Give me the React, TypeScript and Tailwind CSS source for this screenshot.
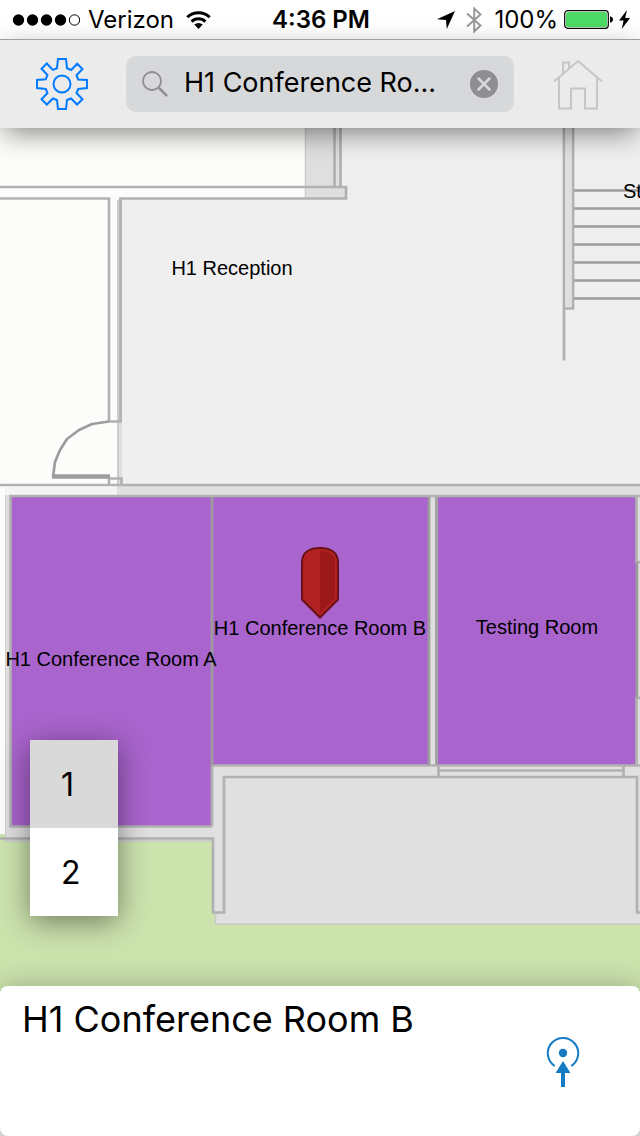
import { useState } from "react";

const stairs = [190, 208, 226, 244, 262, 280, 298];

function StatusBar() {
  return (
    <div className="grid h-[39px] grid-cols-[1fr_auto_1fr] items-center bg-white pr-[10px] pl-3 text-2xl text-black">
      <div className="flex items-center gap-2">
        <svg className="h-3 w-[68px]" viewBox="0 0 68 12" aria-hidden="true">
          <circle cx="6.5" cy="6" r="5.7" />
          <circle cx="20.5" cy="6" r="5.7" />
          <circle cx="34.5" cy="6" r="5.7" />
          <circle cx="48.5" cy="6" r="5.7" />
          <circle cx="62.5" cy="6" r="5.2" fill="none" stroke="#000" />
        </svg>
        <span>Verizon</span>
        <svg className="ml-1 h-[18px] w-[25px]" viewBox="0 0 25 18" aria-hidden="true">
          <g fill="none" stroke="#000" strokeWidth="3">
            <path d="M1.3 6.2a16 16 0 0 1 22.4 0" />
            <path d="M5.6 10.6a9.8 9.8 0 0 1 13.8 0" />
          </g>
          <path d="M8.3 13.6a6 6 0 0 1 8.4 0L12.5 18z" />
        </svg>
      </div>
      <span className="font-semibold">4:36 PM</span>
      <div className="flex items-center justify-end">
        <svg className="mr-[11px] h-[18px] w-[18px]" viewBox="0 0 18 18" aria-hidden="true">
          <path d="M18 0 0 8.2l9 .8.8 9z" />
        </svg>
        <svg className="mr-3 h-7 w-4" viewBox="0 0 16 28" fill="none" stroke="#999" strokeWidth="2" aria-hidden="true">
          <path d="M1 7.5 14.5 19.5 8.2 25.5V2.5L14.5 8.5 1 20.5" />
        </svg>
        <span className="mr-[6px]">100%</span>
        <svg className="mr-[6px] h-[19px] w-[49px]" viewBox="0 0 49 19" aria-hidden="true">
          <rect x=".7" y=".7" width="43.6" height="17.6" rx="3" fill="#fff" stroke="#000" strokeWidth="1.2" />
          <rect x="2" y="2" width="41" height="15" rx="1.8" fill="#4cd964" />
          <path d="M46 6.2c4 .6 4 6 0 6.6z" />
        </svg>
        <svg className="h-[19px] w-[11px]" viewBox="0 0 11 19" aria-hidden="true">
          <path d="M8 0 0 10.5h4.6L2.8 19 11 8H6.2z" />
        </svg>
      </div>
    </div>
  );
}

function GearIcon() {
  return (
    <svg className="h-[52px] w-[52px]" viewBox="0 0 52 52" fill="none" stroke="#007aff" strokeWidth="2" aria-hidden="true">
      <path d="M22 1h8l1 9.2 4.2 1.8 6-6.3 5.3 5.3-6 6.3 1.7 4.2L51 22v8l-8.8 1-1.7 4 6 6.3-5.4 5.2-6-6L31 42l-1 9h-8l-1-9-4-1.5-6.2 6-5.3-5.2L11.5 35 9.8 31 1 30v-8l8.8-.8L11.5 17l-6-6.2 5.3-5.3 6 6.4L21 10.200z" />
      <circle cx="26" cy="26" r="8.5" />
    </svg>
  );
}

function HomeIcon() {
  return (
    <svg className="h-[52px] w-[52px]" viewBox="0 0 52 52" fill="none" stroke="#c6c6c6" strokeWidth="2" aria-hidden="true">
      <path d="M2 23.5 26 3l24 20.5" />
      <path d="M7 20v30.500h12v-20h14v20h12V20" />
      <path d="M11 15.500V4.500h6v5.500" />
    </svg>
  );
}

function FloorPlan() {
  return (
    <svg
      className="absolute inset-0 h-full w-full"
      viewBox="0 128 640 1008"
      preserveAspectRatio="xMidYMin slice"
      role="img"
      aria-label="Floor plan"
    >
      <rect y="128" width="640" height="360" fill="#efefef" />
      <rect y="834" width="640" height="250" fill="#cce3ae" />
      <rect y="1084" width="640" height="52" fill="#e0e0e0" />
      <path d="M0 128h305v70H118v289H5v347H0z" fill="#fcfcfa" />
      <path d="M305 128h36v59h6v11h-42z" fill="#dfdfdf" />
      <path d="M305.500 128v70" stroke="#cccccc" strokeWidth="1.500" />
      <path d="M346.500 199v144H168" fill="none" stroke="#ebebeb" />
      <path d="M117 200h5v285h-5z" fill="#dedede" />
      <path d="M118 200v294" stroke="#c6c6c6" strokeWidth="1.500" />
      <path d="M5 487h112v8H5z" fill="#f3f5f3" />
      <path d="M117 486h523v10H117z" fill="#dfdfdf" />
      <path d="M5 495h635v271H215v75H5z" fill="#dfdfdf" />
      <path d="M4 841h209" stroke="#cacaca" strokeWidth="1.500" />
      <path d="M5.500 495v343" stroke="#cfcfcf" />
      <path d="M214 766h426v158H215v-12h-2z" fill="#e0e0e0" />
      <path d="M215.500 912v12H640" fill="none" stroke="#c9c9c9" strokeWidth="1.500" />

      <g fill="#a964cd">
        <path d="M11 497h201v329H11z" />
        <path d="M213 497h215v268H213z" />
        <path d="M438 497h198v268H438z" />
      </g>

      <g fill="none" stroke="#b1b1b1" strokeWidth="2.700">
        <path d="M0 187h346v11.500H120.500V421.500H109V198.500H0" />
        <path d="M334.500 128v59M340.500 128v59" />
        <path d="M109 485v-6.500h12.500v6.500" />
        <path d="M0 485h640" />
        <path d="M640 496H10.500v330.500H212" />
        <path d="M0 838.500h213v74h11V777h413v135.500h3" />
        <path d="M212 826v-60.500h428" />
        <path d="M438.500 766v11M623.500 766v11M439 770.500h184" />
        <path d="M636.500 496v66h3.500M640 698h-3.500v68" />
        <path d="M564 128v232.500M573 128v180.500h-9" />
      </g>
      <path d="M565.500 128h6v179h-6z" fill="#dfdfdf" />
      <g fill="none" stroke="#9d9d9d" strokeWidth="2.700">
        <path d="M212 497v269" />
        <path d="M429 497v268M436.500 497v268" />
        <path d="M637 562v136" />
        <path d="M109 421.500 92 424l-13 6-12 9-7 11-5 12-2 15" strokeLinejoin="round" />
        <path d="M52 476.500h58" strokeWidth="4.500" />
        {stairs.map((y) => (
          <path key={y} d={`M574 ${y}.5H640`} />
        ))}
      </g>

      <path d="M302 599v-37c0-10 8-14 18-14s18 4 18 14v37l-18 18z" fill="#b22222" />
      <path d="M320 551c9 0 15 3 15 11v36l-15 15z" fill="#9c1919" />
      <path d="M302 599.500v-37.500c0-10 8-14 18-14s18 4 18 14v37.500L320 617.500z" fill="none" stroke="#691015" strokeWidth="2" />

      <g fontFamily="'Liberation Sans', Arial, sans-serif" fontSize="20" textAnchor="middle">
        <text x="232" y="275">H1 Reception</text>
        <text x="111" y="666">H1 Conference Room A</text>
        <text x="320" y="635">H1 Conference Room B</text>
        <text x="537" y="634">Testing Room</text>
        <text x="623" y="198" textAnchor="start">Stairs</text>
      </g>
    </svg>
  );
}

export default function App() {
  const [query, setQuery] = useState("H1 Conference Ro...");
  const [floor, setFloor] = useState(1);

  return (
    <div className="flex min-h-screen flex-col overflow-hidden bg-white font-[Inter,sans-serif] text-black">
      <StatusBar />
      <header className="relative z-10 flex h-[89px] items-center gap-[38px] border-t border-[#9d9f9e] bg-[#ebebeb] px-9 pb-px shadow-[0_8px_28px_-4px_rgba(0,0,0,0.5)]">
        <button type="button" aria-label="Settings">
          <GearIcon />
        </button>
        <div className="flex h-14 min-w-0 flex-1 items-center rounded-[10px] bg-[#d7d8da] px-4">
          <svg className="h-[26px] w-[26px] shrink-0" viewBox="0 0 26 26" fill="none" stroke="#8e8e93" aria-hidden="true">
            <circle cx="10" cy="10" r="9" strokeWidth="1.800" />
            <path d="m16.500 16.500 8.500 8.500" strokeWidth="2.500" />
          </svg>
          <input
            type="text"
            aria-label="Search rooms"
            value={query}
            onChange={(e) => setQuery(e.target.value)}
            className="ml-4 h-10 min-w-0 flex-1 bg-transparent text-[27px] outline-none"
          />
          <button type="button" aria-label="Clear search" onClick={() => setQuery("")}>
            <svg className="h-7 w-7" viewBox="0 0 28 28" aria-hidden="true">
              <circle cx="14" cy="14" r="14" fill="#8e8e93" />
              <path d="m8.500 8.500 11 11m0-11-11 11" stroke="#d7d8da" strokeWidth="2.500" strokeLinecap="round" />
            </svg>
          </button>
        </div>
        <button type="button" aria-label="Home">
          <HomeIcon />
        </button>
      </header>
      <main className="relative flex flex-1 flex-col justify-end">
        <FloorPlan />
        <div className="relative mb-[70px] ml-[30px] flex w-[88px] flex-col bg-white text-[32px] shadow-[0_6px_28px_rgba(0,0,0,0.45)]">
          {[1, 2].map((n) => (
            <button
              key={n}
              type="button"
              aria-pressed={floor === n}
              onClick={() => setFloor(n)}
              className={`h-[88px] pt-[2px] pl-[31px] text-left ${floor === n ? "bg-[#d9d9d9]" : "bg-white"}`}
            >
              {n}
            </button>
          ))}
        </div>
        <section className="relative flex min-h-[150px] justify-between rounded-lg bg-white pt-[10px] pr-[60px] pl-[22px] shadow-[0_0_28px_rgba(0,0,0,0.25)]">
          <h1 className="text-4xl leading-[46px]">H1 Conference Room B</h1>
          <button type="button" aria-label="Navigate to room" className="mt-10 self-start">
            <svg className="h-[52px] w-[34px]" viewBox="0 0 34 52" fill="none" aria-hidden="true">
              <path d="M8.800 30A15.200 15.200 0 1 1 25.200 30" stroke="#147ac2" strokeWidth="2" />
              <circle cx="17" cy="17" r="4.200" fill="#147ac2" />
              <path d="m17 25 7.500 12H19v14h-4V37H9.500z" fill="#147ac2" />
            </svg>
          </button>
        </section>
      </main>
    </div>
  );
}
